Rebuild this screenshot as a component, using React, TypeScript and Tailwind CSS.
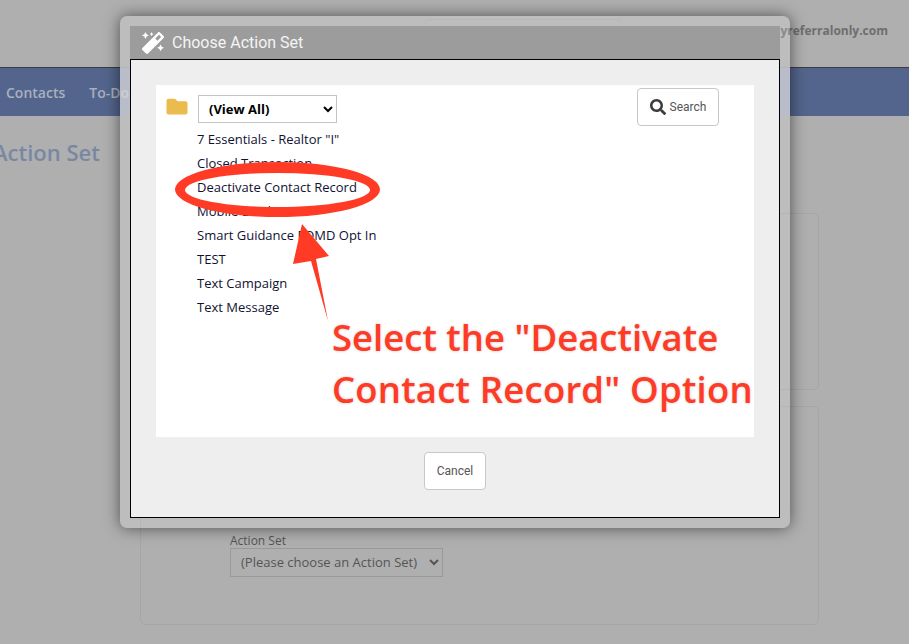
import React from "react";
import { FaMagic, FaSearch, FaFolder } from "react-icons/fa";

const items = [
  '7 Essentials - Realtor "I"',
  "Closed Transaction",
  "Deactivate Contact Record",
  "Mobile Lead",
  "Smart Guidance FOMD Opt In",
  "TEST",
  "Text Campaign",
  "Text Message",
];

export default function App() {
  return (
    <div className="relative w-[909px] h-[644px] overflow-hidden bg-[#afafaf] font-['Open_Sans',sans-serif]">
      {/* page behind the dimmed overlay */}
      <header className="h-[67px] flex items-start">
        <div className="ml-[425px] mt-[19px] w-[197px] h-[30px] border border-[#a9a9a9] rounded-[3px]" />
        <div className="ml-auto mr-[21px] mt-[23px] text-[12px] leading-4 font-bold text-[#6e6e6e]">myreferralonly.com</div>
      </header>
      <nav className="h-[49px] bg-[#53658c] border-t border-[#3c3c3c] flex items-center pl-[6px] gap-6 text-[14px] font-semibold text-[#a9afbf]">
        <span>Contacts</span>
        <span>To-Do</span>
      </nav>
      <h1 className="-ml-[7px] mt-[21px] text-[22px] leading-[30px] font-semibold text-[#7a87a3]">Action Set</h1>
      <main className="ml-[140px] w-[679px] mt-[46px] flex flex-col gap-4">
        <section className="h-[177px] border border-[#a6a6a6] rounded-[5px]" />
        <section className="h-[219px] border border-[#a6a6a6] rounded-[5px] pl-[89px] pt-[126px]">
          <label className="block text-[12px] leading-4 text-[#545454]">Action Set</label>
          <select className="-mt-[2px] w-[213px] h-[29px] pl-[6px] border border-[#999999] text-[13px] text-[#555555] bg-transparent">
            <option>(Please choose an Action Set)</option>
          </select>
        </section>
      </main>

      {/* modal */}
      <div className="absolute left-[120px] top-[16px] w-[670px] h-[512px] rounded-[7px] p-[10px] bg-[#ffffff2e] shadow-[0_0_16px_rgba(0,0,0,0.55)] flex flex-col">
        <div className="absolute left-0 right-0 top-[51px] h-[49px] bg-[#d2d4d8bb]" />
        <div className="relative h-[33px] shrink-0 bg-[#9c9c9c] flex items-center pl-[12px] gap-2 text-white font-['Roboto',sans-serif] text-[16px]">
          <FaMagic className="w-[22px] h-[22px]" />
          <span className="text-[#f4f4f4]">Choose Action Set</span>
        </div>
        <div className="relative flex-1 border border-black bg-[#eeeeee] pt-[25px] px-[25px]">
          <div className="relative h-[352px] bg-white">
            <div className="flex items-center pt-[10px] pl-[9px] gap-[9px]">
              <FaFolder className="w-[24px] h-[21px] text-[#ecbb4e] -mt-[6px]" />
              <select className="w-[139px] h-[28px] pl-[6px] border border-[#c4c4c4] bg-white text-[13px] font-bold text-black">
                <option>(View All)</option>
              </select>
            </div>
            <ul className="mt-[4px] pl-[41px] text-[13px] leading-6 text-[#111133]">
              {items.map((t) => (
                <li key={t}>{t}</li>
              ))}
            </ul>
            <button className="absolute left-[481px] top-[3px] w-[82px] h-[38px] bg-white border border-[#c8c8c8] rounded-[4px] flex items-center justify-center gap-[4px] font-['Roboto',sans-serif] text-[12px] text-[#555555]">
              <FaSearch className="w-[16px] h-[16px] text-[#3c3c3c]" />
              Search
            </button>
          </div>
          <div className="flex justify-center pt-[15px]">
            <button className="w-[62px] h-[38px] bg-white border border-[#c8c8c8] rounded-[4px] font-['Roboto',sans-serif] text-[12px] text-[#555555]">
              Cancel
            </button>
          </div>
        </div>
      </div>

      {/* annotation */}
      <svg className="absolute inset-0 pointer-events-none" width="909" height="644" viewBox="0 0 909 644">
        <path
          fillRule="evenodd"
          fill="#ff3b26"
          d="M175 189.500a102.500 27.500 0 1 0 205 0a102.500 27.500 0 1 0 -205 0ZM185 190a92.500 17 0 1 1 185 0a92.500 17 0 1 1 -185 0Z"
        />
        <polygon fill="#ff3b26" points="302,224 329,256 316,259 328,321 311,261 293,264" />
      </svg>
      <div className="absolute left-[332px] top-[311px] text-[36.5px] leading-[52px] font-semibold whitespace-nowrap text-[#ff3b26] [text-shadow:0_0_3px_#c8c8c8]">
        <div>Select the "Deactivate</div>
        <div className="tracking-[0.2px]">Contact Record" Option</div>
      </div>
    </div>
  );
}
